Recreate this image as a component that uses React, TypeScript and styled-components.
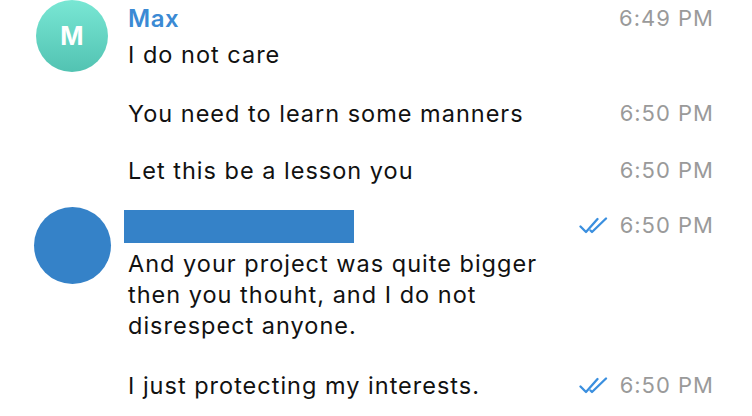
import React from "react";
import styled, { createGlobalStyle } from "styled-components";

const GlobalStyle = createGlobalStyle`
    html, body {
        margin: 0;
        padding: 0;
        background: #ffffff;
    }
    body {
        font-family: Inter, "Noto Sans", "Liberation Sans", sans-serif;
        -webkit-font-smoothing: antialiased;
    }
`;

type Msg = { text: string; time: string; read?: boolean };
type Group = {
    name?: string;
    initial?: string;
    avatar: "mint" | "blue";
    messages: Msg[];
};

const groups: Group[] = [
    {
        name: "Max",
        initial: "M",
        avatar: "mint",
        messages: [
            { text: "I do not care", time: "6:49 PM" },
            { text: "You need to learn some manners", time: "6:50 PM" },
            { text: "Let this be a lesson you", time: "6:50 PM" },
        ],
    },
    {
        avatar: "blue",
        messages: [
            {
                text: "And your project was quite bigger then you thouht, and I do not disrespect anyone.",
                time: "6:50 PM",
                read: true,
            },
            { text: "I just protecting my interests.", time: "6:50 PM", read: true },
        ],
    },
];

const ReadTicks = () => (
    <svg width="29" height="17" viewBox="0 0 29 17" fill="none">
        <path
            d="M1.5 9.5 L7 15 L18.5 2"
            stroke="#3a8fdf"
            strokeWidth="2.3"
            strokeLinecap="round"
            strokeLinejoin="round"
        />
        <path
            d="M11.5 13.5 L13 15 L27 1.5"
            stroke="#3a8fdf"
            strokeWidth="2.3"
            strokeLinecap="round"
            strokeLinejoin="round"
        />
    </svg>
);

const App = () => {
    return (
        <>
            <GlobalStyle />
            <Chat>
                {groups.map((g, gi) => (
                    <GroupRow key={gi}>
                        <AvatarCol>
                            <Avatar $size={g.avatar === "mint" ? 72 : 77} $kind={g.avatar}>
                                {g.initial}
                            </Avatar>
                        </AvatarCol>
                        <Messages>
                            {g.messages.map((m, mi) => (
                                <MessageRow key={mi} $first={mi === 0}>
                                    <Body>
                                        {mi === 0 &&
                                            (g.name ? <Name>{g.name}</Name> : <Redacted />)}
                                        <Text>{m.text}</Text>
                                    </Body>
                                    <Meta>
                                        {m.read && <ReadTicks />}
                                        <Time>{m.time}</Time>
                                    </Meta>
                                </MessageRow>
                            ))}
                        </Messages>
                    </GroupRow>
                ))}
            </Chat>
        </>
    );
};

export default App;

const Chat = styled.div`
    width: 752px;
    height: 416px;
    overflow: hidden;
    display: flex;
    flex-direction: column;
    gap: 21px;
`;

const GroupRow = styled.div`
    display: flex;
    align-items: flex-start;
    padding-top: 3px;
`;

const AvatarCol = styled.div`
    width: 128px;
    flex-shrink: 0;
`;

const Avatar = styled.div<{ $size: number; $kind: "mint" | "blue" }>`
    width: ${(p) => p.$size}px;
    height: ${(p) => p.$size}px;
    margin-top: -3px;
    margin-left: ${(p) => 72 - p.$size / 2}px;
    border-radius: 50%;
    background: ${(p) =>
        p.$kind === "mint"
            ? "linear-gradient(180deg, #79e7d4 0%, #52c3b2 100%)"
            : "#3582c8"};
    color: #ffffff;
    font-size: 25px;
    font-weight: 700;
    display: flex;
    align-items: center;
    justify-content: center;
`;

const Messages = styled.div`
    flex: 1;
    display: flex;
    flex-direction: column;
    gap: 25px;
`;

const MessageRow = styled.div<{ $first: boolean }>`
    display: flex;
    align-items: flex-start;
    padding-right: 38px;
    padding-bottom: ${(p) => (p.$first ? 3 : 0)}px;
`;

const Body = styled.div`
    flex: 1;
    display: flex;
    flex-direction: column;
    max-width: 430px;
`;

const Name = styled.div`
    font-size: 24px;
    font-weight: 600;
    line-height: 31px;
    letter-spacing: 0.5px;
    color: #3b8ad4;
    margin-bottom: 5px;
`;

const Redacted = styled.div`
    width: 230px;
    height: 33px;
    margin-left: -4px;
    margin-bottom: 5px;
    background: #3582c8;
`;

const Text = styled.div`
    font-size: 23.5px;
    line-height: 31.3px;
    letter-spacing: 1px;
    color: #111111;
`;

const Meta = styled.div`
    margin-left: auto;
    display: flex;
    align-items: center;
    gap: 12px;
    height: 31px;
`;

const Time = styled.span`
    font-size: 22px;
    line-height: 31px;
    letter-spacing: 1px;
    color: #9a9a9a;
    white-space: nowrap;
`;
